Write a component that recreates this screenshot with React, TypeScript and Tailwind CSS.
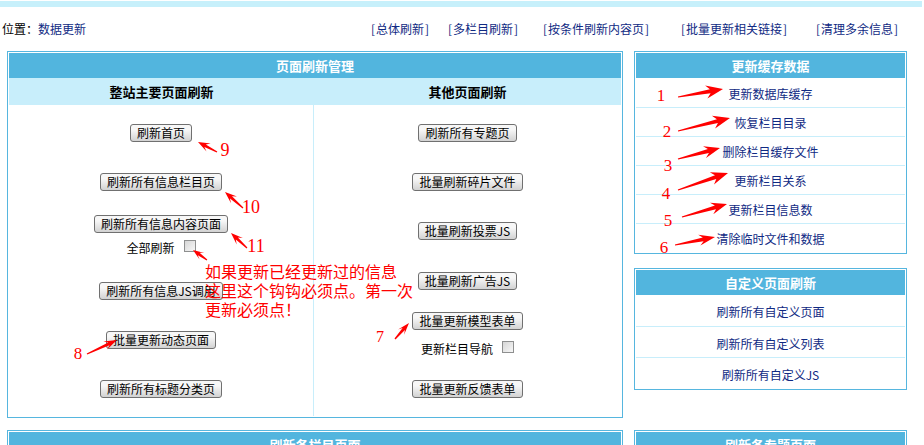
import React from "react";

type Item = { label: string; mt: string; check?: boolean };

const leftItems: Item[] = [
  { label: "刷新首页", mt: "mt-[19px]" },
  { label: "刷新所有信息栏目页", mt: "mt-[31px]" },
  { label: "刷新所有信息内容页面", mt: "mt-[24px]" },
  { label: "全部刷新", mt: "mt-[7px]", check: true },
  { label: "刷新所有信息JS调用", mt: "mt-[26px]" },
  { label: "批量更新动态页面", mt: "mt-[31px]" },
  { label: "刷新所有标题分类页", mt: "mt-[31px]" },
];

const rightItems: Item[] = [
  { label: "刷新所有专题页", mt: "mt-[19px]" },
  { label: "批量刷新碎片文件", mt: "mt-[31px]" },
  { label: "批量刷新投票JS", mt: "mt-[31px]" },
  { label: "批量刷新广告JS", mt: "mt-[32px]" },
  { label: "批量更新模型表单", mt: "mt-[22px]" },
  { label: "更新栏目导航", mt: "mt-[11px]", check: true },
  { label: "批量更新反馈表单", mt: "mt-[23px]" },
];

const cacheLinks = [
  "更新数据库缓存",
  "恢复栏目目录",
  "删除栏目缓存文件",
  "更新栏目关系",
  "更新栏目信息数",
  "清除临时文件和数据",
];

const customLinks = ["刷新所有自定义页面", "刷新所有自定义列表", "刷新所有自定义JS"];

const topLinks = [
  { label: "总体刷新", ml: "ml-0" },
  { label: "多栏目刷新", ml: "ml-[19px]" },
  { label: "按条件刷新内容页", ml: "ml-[25px]" },
  { label: "批量更新相关链接", ml: "ml-[32px]" },
  { label: "清理多余信息", ml: "ml-[29px]" },
];

// arrows: tail x,y -> tip x,y, head length, head width, shaft width
const arrows = [
  [678, 97, 723, 89, 15, 13, 4],
  [678, 131, 730, 118, 15, 13, 4],
  [678, 159, 720, 148, 14, 12, 4],
  [678, 190, 728, 173, 15, 13, 4],
  [682, 217, 727, 204, 14, 12, 4],
  [675, 245, 715, 237, 14, 11, 4],
  [217, 152, 198, 142, 10, 9, 3],
  [243, 208, 225, 192, 10, 9, 3],
  [247, 248, 231, 233, 10, 9, 3],
  [207, 260, 193, 250, 9, 8, 3],
  [87, 354, 117, 340, 11, 9, 3],
  [395, 339, 409, 323, 10, 8, 3],
];

const numbers: [string, number, number, number][] = [
  ["1", 661, 95, 17],
  ["2", 667, 131, 17],
  ["3", 668, 165, 17],
  ["4", 666, 193, 17],
  ["5", 668, 220, 17],
  ["6", 664, 247, 17],
  ["9", 225, 150, 18],
  ["10", 251, 207, 18],
  ["11", 256, 246, 18],
  ["8", 78, 353, 17],
  ["7", 380, 336, 16],
];

const arrowPoints = (a: number[]) => {
  const [x1, y1, x2, y2, hl, hw, sw] = a;
  const dx = x2 - x1;
  const dy = y2 - y1;
  const len = Math.hypot(dx, dy);
  const ux = dx / len;
  const uy = dy / len;
  const nx = -uy;
  const ny = ux;
  const bx = x2 - ux * hl;
  const by = y2 - uy * hl;
  const pts = [
    [x1 + nx * 0.6, y1 + ny * 0.6],
    [bx + ux * 2 + (nx * sw) / 2, by + uy * 2 + (ny * sw) / 2],
    [bx - ux * 2 + (nx * hw) / 2, by - uy * 2 + (ny * hw) / 2],
    [x2, y2],
    [bx - ux * 2 - (nx * hw) / 2, by - uy * 2 - (ny * hw) / 2],
    [bx + ux * 2 - (nx * sw) / 2, by + uy * 2 - (ny * sw) / 2],
    [x1 - nx * 0.6, y1 - ny * 0.6],
  ];
  return pts.map((p) => p[0].toFixed(1) + "," + p[1].toFixed(1)).join(" ");
};

const Btn = ({ label }: { label: string }) => (
  <button className="h-[18px] px-[6px] border border-[#707070] rounded-[3px] bg-linear-to-b from-[#f7f7f7] from-30% to-[#d2d2d2] text-[12px] leading-[16px] text-black whitespace-nowrap">
    {label}
  </button>
);

const Check = () => (
  <span className="inline-block w-[12px] h-[12px] border border-[#8e8f8f] bg-linear-to-br from-[#d6d6d6] to-[#f7f7f7]" />
);

const Column = ({ items }: { items: Item[] }) => (
  <div className="flex flex-col items-center">
    {items.map((it) =>
      it.check ? (
        <div key={it.label} className={`${it.mt} flex items-start gap-[9px] h-[16px]`}>
          <span className="leading-[16px] text-black">{it.label}</span>
          <Check />
        </div>
      ) : (
        <div key={it.label} className={it.mt}>
          <Btn label={it.label} />
        </div>
      )
    )}
  </div>
);

const Header = ({ title }: { title: string }) => (
  <div className="h-[25px] bg-[#52b5de] flex items-center justify-center text-white font-bold text-[13px]">
    {title}
  </div>
);

const App: React.FC = () => {
  return (
    <div className="relative w-[924px] h-[445px] overflow-hidden bg-white text-[12px] font-['Noto_Sans_CJK_SC',sans-serif] text-black">
      <div className="mt-px h-[6px] w-[922px] bg-[#c7f0fb]" />

      {/* breadcrumb */}
      <div className="h-[44px] flex items-center">
        <div className="w-[371px] pl-[2px] whitespace-nowrap">
          位置：<span className="text-[#102a83]">数据更新</span>
        </div>
        {topLinks.map((l) => (
          <span key={l.label} className={`${l.ml} flex text-[#102a83] whitespace-nowrap`}>
            <span className="w-[5px]">[</span>
            {l.label}
            <span className="w-[5px] text-right">]</span>
          </span>
        ))}
      </div>

      <div className="flex items-start">
        {/* left panel */}
        <div className="ml-[7px] w-[616px] border border-[#56b6df] p-px bg-white">
          <Header title="页面刷新管理" />
          <div className="h-[27px] bg-[#c8eefb] flex font-bold text-[13px]">
            <div className="w-[305px] flex items-center justify-center">整站主要页面刷新</div>
            <div className="flex-1 flex items-center justify-center">其他页面刷新</div>
          </div>
          <div className="h-[311px] flex">
            <div className="w-[305px] border-r border-[#c8eefb]">
              <Column items={leftItems} />
            </div>
            <div className="flex-1">
              <Column items={rightItems} />
            </div>
          </div>
        </div>

        {/* right column */}
        <div className="ml-[11px] w-[273px] flex flex-col">
          <div className="border border-[#56b6df] p-px">
            <Header title="更新缓存数据" />
            {cacheLinks.map((t, i) => (
              <div
                key={t}
                className={`h-[29px] pt-[2px] flex items-center justify-center text-[#102a83] ${
                  i > 0 ? "border-t border-[#c8eefb]" : ""
                }`}
              >
                {t}
              </div>
            ))}
          </div>

          <div className="mt-[14px] border border-[#56b6df] p-px">
            <Header title="自定义页面刷新" />
            {customLinks.map((t, i) => (
              <div
                key={t}
                className={`h-[31px] pt-[3px] flex items-center justify-center text-[#102a83] ${
                  i > 0 ? "border-t border-[#c8eefb]" : ""
                }`}
              >
                {t}
              </div>
            ))}
          </div>
        </div>
      </div>

      {/* next row of panels, cut off by the window */}
      <div className="mt-[12px] flex items-start">
        <div className="ml-[7px] w-[616px] border border-[#56b6df] p-px">
          <Header title="刷新各栏目页面" />
        </div>
        <div className="ml-[11px] w-[273px] border border-[#56b6df] p-px">
          <Header title="刷新各专题页面" />
        </div>
      </div>

      {/* red annotations drawn over the page */}
      <div className="absolute left-[205px] top-[262px] text-[16px] leading-[19px] text-[#ff0000] whitespace-nowrap pointer-events-none">
        <div>如果更新已经更新过的信息</div>
        <div>这里这个钩钩必须点。第一次</div>
        <div>更新必须点！</div>
      </div>
      <svg className="absolute left-0 top-0 pointer-events-none" width={924} height={445}>
        {arrows.map((a, i) => (
          <polygon key={i} points={arrowPoints(a)} fill="#ff0000" />
        ))}
        {numbers.map(([n, x, y, s]) => (
          <text
            key={n}
            x={x}
            y={y}
            fontSize={s}
            fill="#ff0000"
            textAnchor="middle"
            dominantBaseline="central"
            fontFamily="'Liberation Serif', serif"
          >
            {n}
          </text>
        ))}
      </svg>
    </div>
  );
};

export default App;
